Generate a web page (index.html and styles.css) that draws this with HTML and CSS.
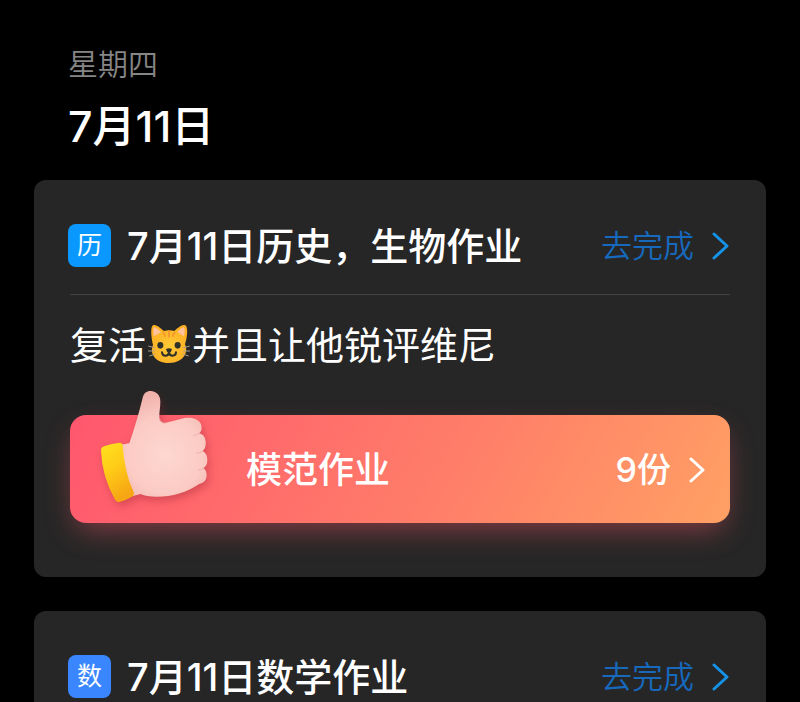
FILE: index.html
```
<!DOCTYPE html>
<html lang="zh-CN">
<head>
    <meta charset="UTF-8">
    <meta name="viewport" content="width=device-width, initial-scale=1">
    <title>作业</title>
    <link rel="stylesheet" href="styles.css">
</head>
<body>
<div class="page">
    <header class="date">
        <p class="week">星期四</p>
        <h1>7月11日</h1>
    </header>

    <section class="card">
        <div class="card-head">
            <span class="badge">历</span>
            <h2>7月11日历史，生物作业</h2>
            <a class="todo" href="#">去完成
                <svg class="arrow" viewBox="0 0 18 30"><path d="M2 3 L15 15 L2 27"/></svg>
            </a>
        </div>
        <div class="card-body">
            <p class="note">复活<svg class="cat" viewBox="0 0 126 126" role="img" aria-label="猫">
                <defs>
                    <radialGradient id="fur" cx="50%" cy="55%" r="60%">
                        <stop offset="0" stop-color="#ffc936"/>
                        <stop offset="1" stop-color="#fcae22"/>
                    </radialGradient>
                </defs>
                <path d="M15 66 C9 40 7 12 15 7 C24 2 39 17 48 24 Q63 20 79 24 C88 16 103 2 112 7 C121 13 118 42 111 64 C122 86 108 120 63 120 C18 120 5 88 15 66Z" fill="url(#fur)"/>
                <path d="M18 40 C14 22 16 12 20 13 C26 15 34 22 39 28Z M108 40 C112 22 110 12 106 13 C100 15 93 22 88 28Z" fill="#ffc39c"/>
                <path d="M46 29 Q51 33 51 39 M63 25 V41 M80 29 Q75 33 75 39" fill="none" stroke="#f79a2c" stroke-width="6" stroke-linecap="round"/>
                <path d="M1 69 L21 75 M0 84 L20 84 M4 99 L22 93 M125 69 L105 75 M126 84 L106 84 M122 99 L104 93" stroke="#aaa18b" stroke-width="3"/>
                <ellipse cx="37" cy="67" rx="9" ry="10" fill="#30302b"/>
                <ellipse cx="89" cy="67" rx="9" ry="10" fill="#30302b"/>
                <path d="M54 78 Q63 74 72 78 Q71 87 63 90 Q55 87 54 78Z" fill="#30302b"/>
                <path d="M42 88 Q43 98 52 98 Q62 98 63 88 Q64 98 74 98 Q84 98 84 88" fill="none" stroke="#30302b" stroke-width="6" stroke-linecap="round"/>
            </svg>并且让他锐评维尼</p>
            <a class="banner" href="#">
                <svg class="thumb" viewBox="0 0 390 405">
                    <defs>
                        <radialGradient id="skin" gradientUnits="userSpaceOnUse" cx="225" cy="225" r="190">
                            <stop offset="0" stop-color="#fdd8d1"/>
                            <stop offset="0.6" stop-color="#fbcbc4"/>
                            <stop offset="1" stop-color="#f0b1ab"/>
                        </radialGradient>
                        <linearGradient id="cuff" x1="0" y1="0" x2="0.4" y2="1">
                            <stop offset="0" stop-color="#ffe21f"/>
                            <stop offset="0.5" stop-color="#ffcb18"/>
                            <stop offset="1" stop-color="#f6a713"/>
                        </linearGradient>
                    </defs>
                    <path d="M90 194 L118 190 C133 145 148 96 158 53 C162 38 171 32 184 33 C202 35 211 48 211 66 C211 84 207 99 208 112 C209 123 216 131 228 128 L284 114 C305 110 330 117 334 136 Q337 151 328 160 Q345 164 347 184 Q349 205 338 213 Q352 221 352 240 Q352 257 341 264 Q353 275 349 293 Q346 307 329 311 C290 337 247 350 200 350 Q169 350 152 342 L120 350Z" fill="url(#skin)"/>
                    <path d="M209 118 Q214 132 229 128 M328 160 Q321 166 311 166 M338 213 Q331 219 321 219 M341 264 Q334 270 326 270" fill="none" stroke="#e99f9b" stroke-width="4" stroke-linecap="round" opacity="0.5"/>
                    <path d="M33 212 Q32 203 42 199 Q65 190 90 188 Q97 188 98 197 Q103 275 131 337 Q134 345 126 350 Q105 362 88 366 Q79 367 75 359 Q36 290 33 212Z" fill="url(#cuff)"/>
                </svg>
                <span class="banner-title">模范作业</span>
                <span class="count">9份</span>
                <svg class="arrow" viewBox="0 0 18 30"><path d="M2 4 L14 15 L2 26"/></svg>
            </a>
        </div>
    </section>

    <section class="card">
        <div class="card-head">
            <span class="badge math">数</span>
            <h2>7月11日数学作业</h2>
            <a class="todo" href="#">去完成
                <svg class="arrow" viewBox="0 0 18 30"><path d="M2 3 L15 15 L2 27"/></svg>
            </a>
        </div>
    </section>
</div>
</body>
</html>
```
FILE: styles.css
```
* {
    padding: 0;
    margin: 0;
    box-sizing: border-box;
}

body {
    background: #000;
    color: #fff;
    font-family: Inter, "Noto Sans CJK SC", sans-serif;
}

a {
    color: inherit;
    text-decoration: none;
}

.page {
    height: 100vh;
    padding: 42px 34px 0;
    overflow: hidden;
}

.date {
    padding: 0 34px;
    margin-bottom: 22px;
}

.week {
    font-size: 30px;
    line-height: 44px;
    font-weight: 350;
    color: #868686;
}

h1 {
    margin-top: 8px;
    font-size: 43px;
    line-height: 64px;
    font-weight: 500;
}

.card {
    padding: 44px 36px 54px 34px;
    margin-bottom: 34px;
    background: #262626;
    border-radius: 12px;
}

.card-head {
    display: flex;
    align-items: center;
    height: 43px;
}

.badge {
    width: 43px;
    height: 43px;
    margin-right: 16px;
    border-radius: 8px;
    background: #0a98ff;
    font-size: 25px;
    line-height: 43px;
    text-align: center;
}

.math {
    background: #3a86ff;
}

h2 {
    flex: 1;
    font-size: 38px;
    line-height: 44px;
    font-weight: 500;
    white-space: nowrap;
}

.todo {
    display: flex;
    align-items: center;
    gap: 18px;
    font-size: 31px;
    line-height: 44px;
    font-weight: 350;
    color: #1769be;
}

.arrow {
    width: 18px;
    height: 30px;
    fill: none;
    stroke: #fff;
    stroke-width: 3;
    stroke-linecap: round;
    stroke-linejoin: round;
}

.todo .arrow {
    stroke: #1593e8;
}

.card-body {
    margin: 27px 0 0 2px;
    border-top: 1px solid #424242;
}

.note {
    padding: 22px 0 42px;
    font-size: 38px;
    line-height: 56px;
}

.cat {
    width: 42px;
    height: 42px;
    margin: 0 2px;
    vertical-align: -6px;
}

.banner {
    position: relative;
    display: flex;
    align-items: center;
    height: 108px;
    padding: 2px 23px 0 176px;
    border-radius: 16px;
    background: linear-gradient(120deg, #ff576e, #ff7c69 55%, #ffa064);
    box-shadow: 0 12px 30px -6px rgba(255, 91, 107, 0.45);
    font-size: 36px;
    line-height: 52px;
    font-weight: 500;
}

/* the hand sticks out over the top of the banner */
.thumb {
    position: absolute;
    left: 20px;
    top: -35px;
    width: 130px;
    height: 135px;
    filter: drop-shadow(2px 4px 4px rgba(140, 30, 40, 0.35));
}

.banner-title {
    flex: 1;
}

.count {
    margin-right: 18px;
    font-size: 34px;
}
```
